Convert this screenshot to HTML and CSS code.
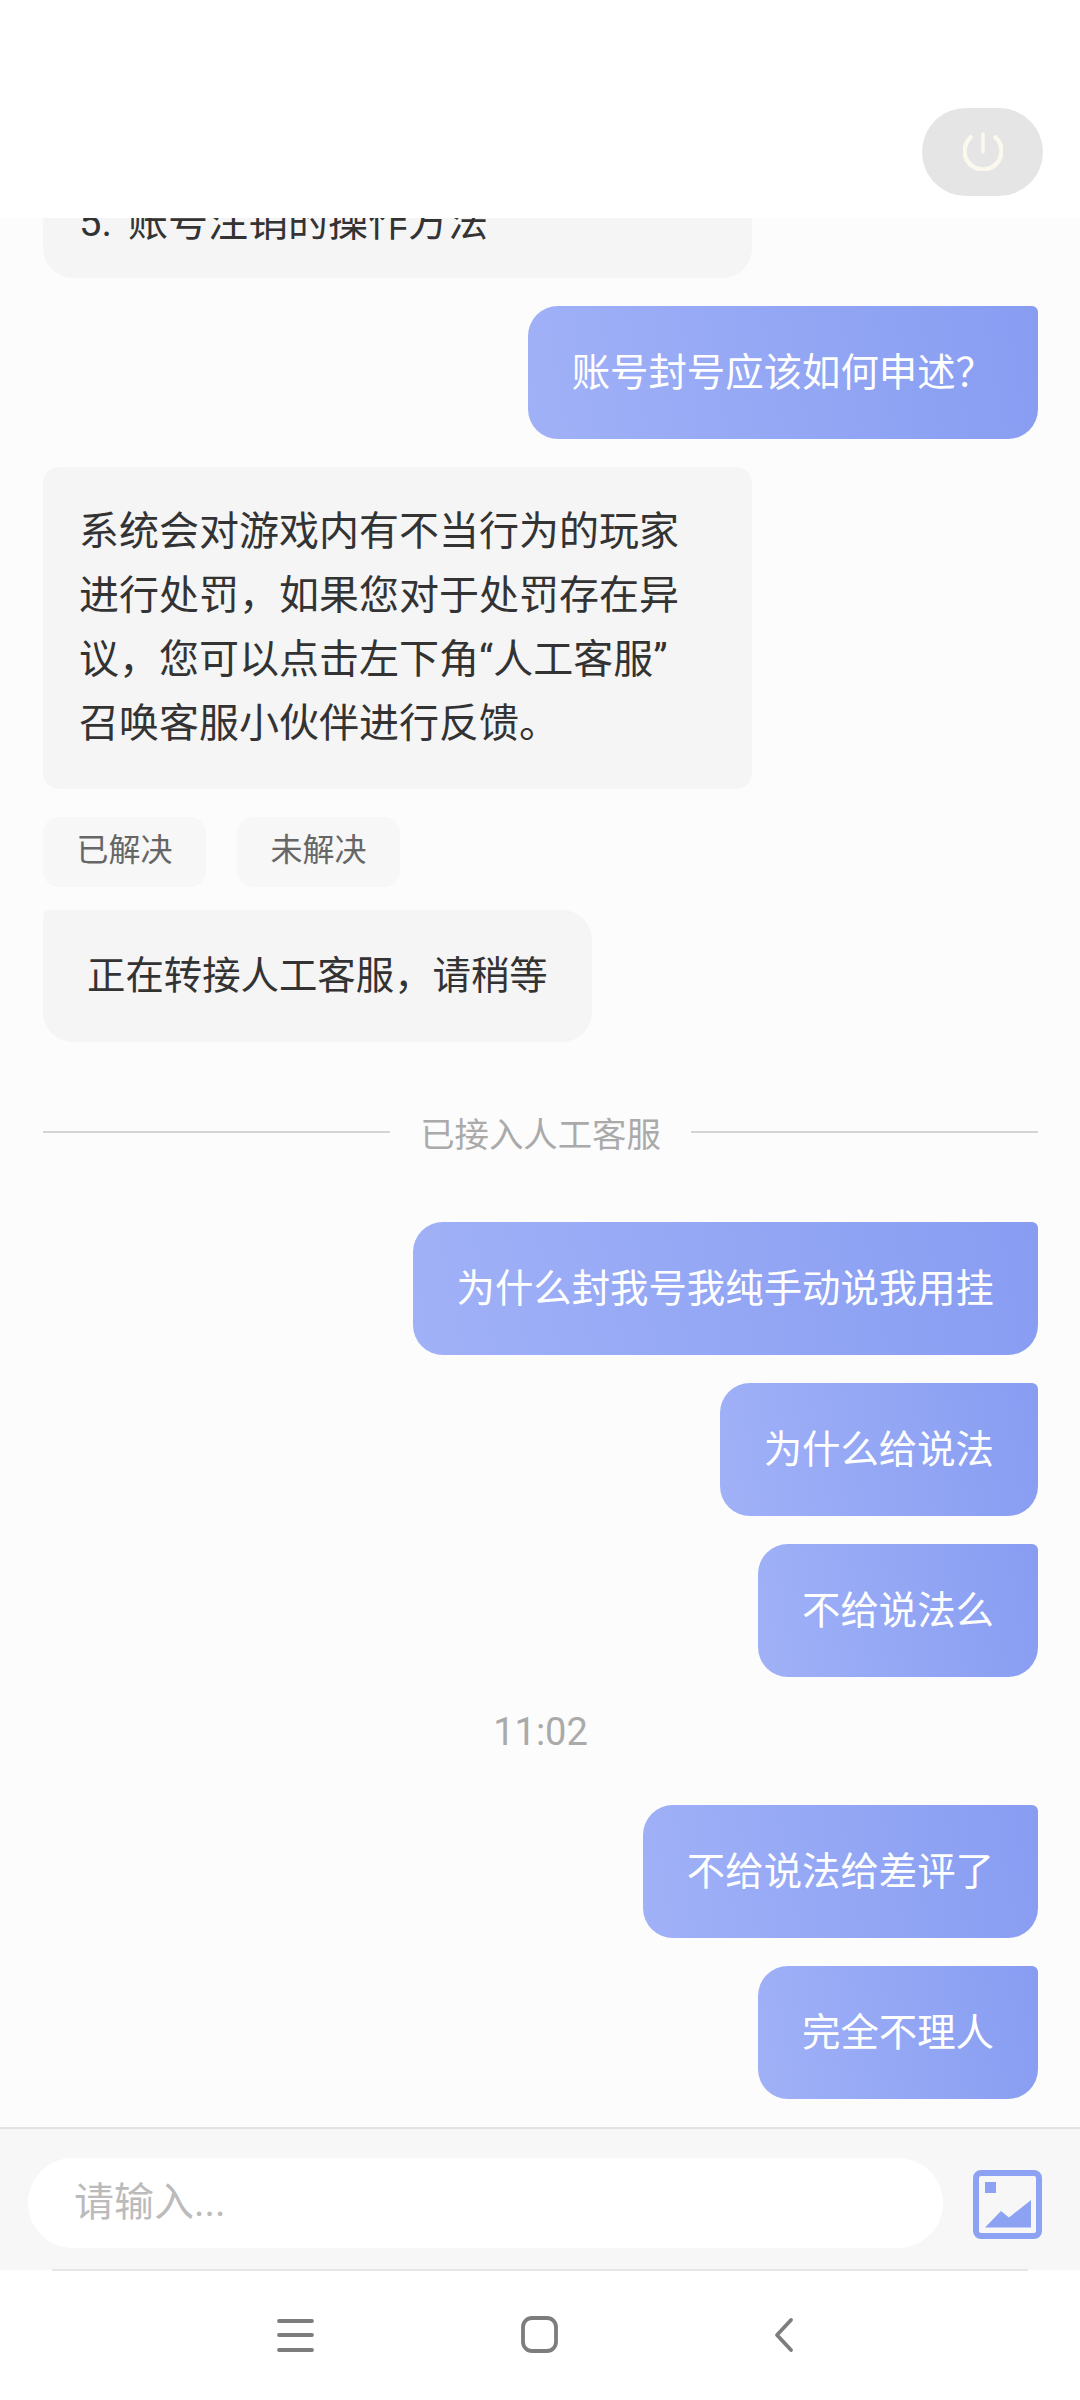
FILE: index.html
```html
<!DOCTYPE html>
<html lang="zh-CN">
<head>
  <meta charset="UTF-8">
  <meta name="viewport" content="width=device-width, initial-scale=1.0">
  <title>客服</title>
  <link rel="stylesheet" href="styles.css">
</head>
<body>

  <div class="page">
    <header class="top-bar">
      <button class="power-button">
        <svg class="power-icon" viewBox="0 0 40 40">
          <path d="M7.5 6.3A18.5 18.5 0 1 0 32.5 6.3"/>
          <path class="power-bar" d="M20 3V21"/>
        </svg>
      </button>
    </header>

    <main class="chat">
      <div class="bubble left answer clipped">5. 账号注销的操作方法</div>
      <div class="bubble right">账号封号应该如何申述？</div>
      <div class="bubble left answer">系统会对游戏内有不当行为的玩家进行处罚，如果您对于处罚存在异议，您可以点击左下角“人工客服”召唤客服小伙伴进行反馈。</div>
      <div class="chips">
        <button class="chip">已解决</button>
        <button class="chip">未解决</button>
      </div>
      <div class="bubble left notice">正在转接人工客服，请稍等</div>
      <div class="divider">已接入人工客服</div>
      <div class="bubble right">为什么封我号我纯手动说我用挂</div>
      <div class="bubble right">为什么给说法</div>
      <div class="bubble right">不给说法么</div>
      <div class="time">11:02</div>
      <div class="bubble right">不给说法给差评了</div>
      <div class="bubble right">完全不理人</div>
    </main>

    <div class="input-bar">
      <input class="text-input" type="text" placeholder="请输入...">
      <svg class="image-icon" viewBox="0 0 69 69">
        <rect x="3" y="3" width="63" height="63" rx="5"/>
        <path class="fill" d="M12 12h11v11H12z"/>
        <path class="fill" d="M12 57.5 28 41l8 6.5L58 30v27.5z"/>
      </svg>
    </div>

    <nav class="nav-bar">
      <svg class="nav-icon" viewBox="0 0 40 40"><path d="M4 6h33M4 20h33M4 35h33"/></svg>
      <svg class="nav-icon" viewBox="0 0 40 40"><rect x="3" y="3" width="33" height="33" rx="9"/></svg>
      <svg class="nav-icon" viewBox="0 0 40 40"><path d="M26 5 12 20l14 15"/></svg>
    </nav>
  </div>

</body>
</html>
```

FILE: styles.css
```css
* {
  box-sizing: border-box;
}

body {
  margin: 0;
  font-family: Roboto, "Noto Sans CJK SC", sans-serif;
  background: #fff;
}

.page {
  display: flex;
  flex-direction: column;
  height: 100vh;
}

.top-bar {
  display: flex;
  justify-content: flex-end;
  height: 218px;
  padding: 108px 37px 0 0;
  background: #fff;
}

.power-button {
  display: flex;
  align-items: center;
  justify-content: center;
  width: 121px;
  height: 88px;
  padding: 0 0 2px;
  border: none;
  border-radius: 44px;
  background: #e5e5e5;
}

.power-icon {
  width: 40px;
  height: 40px;
  fill: none;
  stroke: #fbf8ee;
  stroke-width: 4.5;
  stroke-linecap: round;
}

.power-bar {
  stroke-width: 3.6;
}

/* anchored to the bottom so older messages get cut off under the top bar */
.chat {
  flex: 1;
  min-height: 0;
  overflow: hidden;
  display: flex;
  flex-direction: column;
  justify-content: flex-end;
  gap: 28px;
  padding: 0 42px 28px 43px;
  background: #fcfcfc;
}

.bubble {
  flex-shrink: 0;
  width: fit-content;
}

.bubble.left {
  background: #f5f5f5;
  color: #333;
}

.bubble.answer {
  width: 709px;
  padding: 33px 48px 33px 36px;
  font-size: 40px;
  line-height: 64px;
  border-radius: 16px;
}

.bubble.clipped {
  padding-bottom: 23px;
  border-radius: 30px;
  word-spacing: 6px;
}

.bubble.notice {
  margin-top: -5px;
  padding: 34px 44px;
  font-size: 38.4px;
  line-height: 64px;
  border-radius: 6px 30px 30px 30px;
}

.bubble.right {
  align-self: flex-end;
  padding: 34px 44px;
  font-size: 38.4px;
  line-height: 65px;
  color: #fff;
  background: linear-gradient(80deg, #a0b1f7, #889df2);
  border-radius: 30px 6px 30px 30px;
}

.chips {
  flex-shrink: 0;
  display: flex;
  gap: 31px;
}

.chip {
  width: 163px;
  height: 70px;
  padding: 0 0 10px;
  border: none;
  border-radius: 16px;
  background: #f7f7f7;
  color: #666;
  font-family: inherit;
  font-size: 32px;
}

.divider {
  flex-shrink: 0;
  display: flex;
  align-items: center;
  gap: 30px;
  height: 54px;
  margin: 35px 0;
  font-size: 34.4px;
  color: #aaa;
}

.divider::before,
.divider::after {
  content: "";
  flex: 1;
  height: 2px;
  background: #d4d4d4;
}

.time {
  flex-shrink: 0;
  height: 46px;
  margin: 4px 0 22px;
  text-align: center;
  font-size: 38px;
  line-height: 46px;
  color: #aaa;
}

.input-bar {
  display: flex;
  align-items: center;
  gap: 30px;
  height: 143px;
  padding: 6px 38px 0 28px;
  border-top: 2px solid #e2e2e2;
  background: #f7f7f7;
}

.text-input {
  flex: 1;
  height: 90px;
  padding: 0 46px;
  border: none;
  border-radius: 45px;
  background: #fff;
  font-family: inherit;
  font-size: 40px;
}

.text-input::placeholder {
  color: #bbb;
}

.image-icon {
  width: 69px;
  height: 69px;
  margin-top: 3px;
  fill: none;
  stroke: #8ea2f3;
  stroke-width: 6;
}

.image-icon .fill {
  fill: #8ea2f3;
  stroke: none;
}

.nav-bar {
  position: relative;
  display: flex;
  align-items: center;
  justify-content: center;
  gap: 205px;
  height: 130px;
  background: #fff;
}

.nav-bar::before {
  content: "";
  position: absolute;
  top: -1px;
  left: 52px;
  right: 52px;
  height: 2px;
  background: #e6e6e6;
}

.nav-icon {
  width: 40px;
  height: 40px;
  fill: none;
  stroke: #7d7d7d;
  stroke-width: 3.8;
  stroke-linecap: round;
  stroke-linejoin: round;
}
```
